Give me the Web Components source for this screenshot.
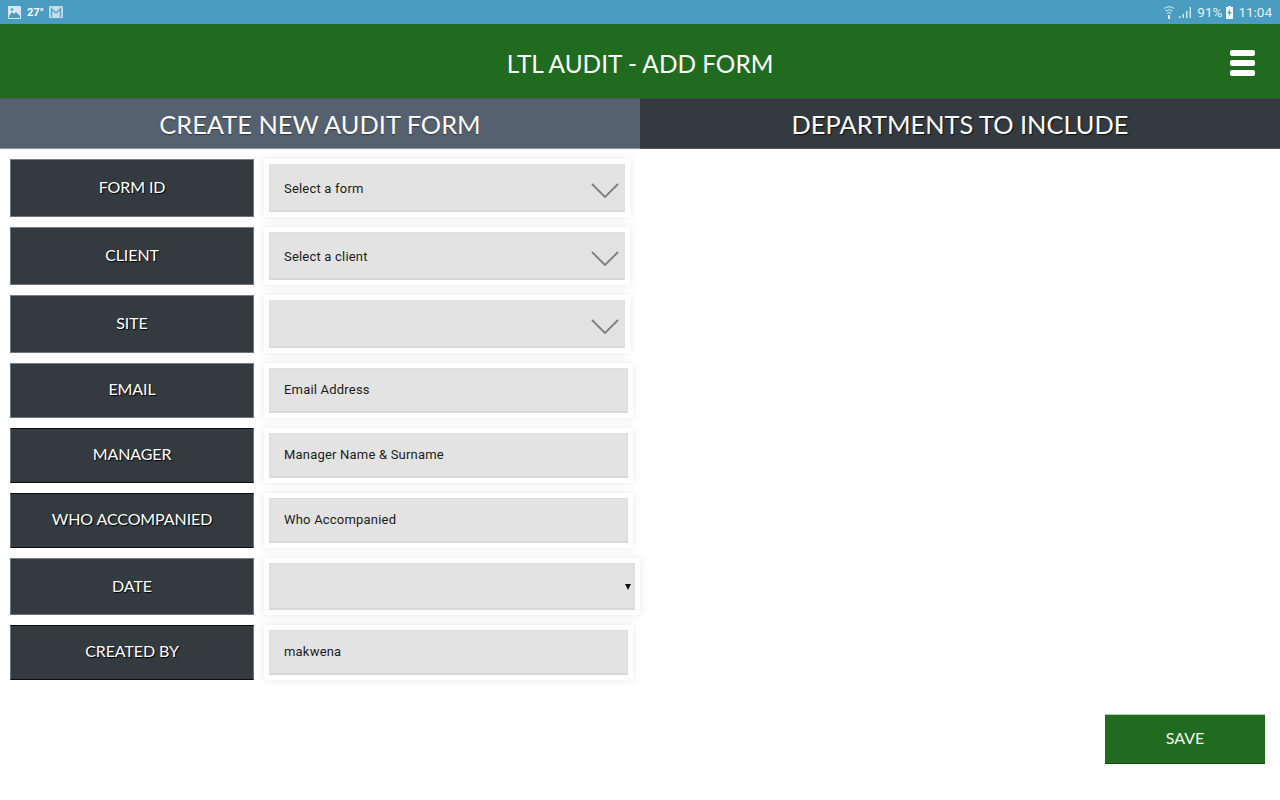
<!DOCTYPE html>
<html>
<head>
<meta charset="utf-8">
<title>LTL Audit - Add Form</title>
<style>
html, body { margin: 0; padding: 0; height: 100%; background: #fff; overflow: hidden; }
body { font-family: "Lato", "Liberation Sans", sans-serif; }
audit-app { height: 800px; }
</style>
</head>
<body>
<audit-app></audit-app>
<script>
class StatusBar extends HTMLElement {
  connectedCallback() {
    const root = this.attachShadow({ mode: 'open' });
    root.innerHTML = `
<style>
:host { display: flex; align-items: center; justify-content: space-between; height: 24px; background: #4a9dc0; color: #e4f1f6; font: 13.500px "Roboto", sans-serif; padding: 0 8px; box-sizing: border-box; }
.side { display: flex; align-items: center; }
.temp { font: bold 11px "Roboto", sans-serif; color: #fff; margin: 0 5px 0 6px; }
.pct { margin: 0 4px 0 5px; }
svg { display: block; }
</style>
<div class="side">
  <svg width="13" height="13" viewBox="0 0 13 13"><rect width="13" height="13" rx="1" fill="#d3e8f0"/><path d="M1 10l3-4 2 2 2-2 4 4v2H1z" fill="#4a9dc0"/><circle cx="4" cy="3.500" r="1.300" fill="#4a9dc0"/></svg>
  <span class="temp">27°</span>
  <svg width="14" height="12" viewBox="0 0 14 12"><rect width="14" height="12" rx="1" fill="#c4dfe9"/><path d="M2.500 11V3L7 7l4.500-4v8" fill="none" stroke="#5ba6c6" stroke-width="1.500"/></svg>
</div>
<div class="side">
  <svg width="12" height="14" viewBox="0 0 12 14" fill="none" stroke="#dcecf3"><path d="M1 3.500q5-3.500 10 0M2.500 6q3.500-2.500 7 0M4 8.300q2-1.300 4 0"/><path d="M6 10v4" stroke-width="2"/></svg>
  <svg width="13" height="12" viewBox="0 0 13 12" fill="#cfe4ed" style="margin-left:4px"><rect x="0" y="10" width="1.500" height="2"/><rect x="3.500" y="8" width="1.500" height="4"/><rect x="7" y="5" width="1.500" height="7"/><rect x="10.500" y="1" width="1.500" height="11"/></svg>
  <span class="pct">91%</span>
  <svg width="7" height="13" viewBox="0 0 7 13"><rect y="1" width="7" height="12" fill="#f2f8fa"/><rect x="2" width="3" height="1" fill="#f2f8fa"/><path d="M4.200 2.500L1.500 7.500h1.800L2.500 11l3-5H3.700z" fill="#4a9dc0"/></svg>
  <span style="margin-left:5px">11:04</span>
</div>`;
  }
}
customElements.define('status-bar', StatusBar);

class TopBar extends HTMLElement {
  connectedCallback() {
    const root = this.attachShadow({ mode: 'open' });
    root.innerHTML = `
<style>
:host { display: flex; align-items: center; justify-content: center; position: relative; height: 74px; padding-top: 5px; box-sizing: border-box; background: #216b20; color: #fff; font-size: 24.400px; }
.menu { position: absolute; right: 25px; top: 26px; display: flex; flex-direction: column; gap: 4px; }
.menu i { display: block; width: 25px; height: 6px; border-radius: 2px; background: #fff; }
</style>
<slot></slot>
<div class="menu"><i></i><i></i><i></i></div>`;
  }
}
customElements.define('top-bar', TopBar);

class TabHead extends HTMLElement {
  connectedCallback() {
    const root = this.attachShadow({ mode: 'open' });
    root.innerHTML = `
<style>
:host { flex: 1; display: flex; align-items: center; justify-content: center; height: 51px; color: #fff; font-size: 25.400px; background: #333b41; text-shadow: 1px 1px 1px #111; box-sizing: border-box; border-top: 1px solid #3c4349; border-bottom: 1px solid #555; }
:host([active]) { background: #56616f; text-shadow: 0 1px 1px #333; border-top-color: #4f5a67; border-bottom-color: #8a929b; }
</style>
<slot></slot>`;
  }
}
customElements.define('tab-head', TabHead);

class FormRow extends HTMLElement {
  connectedCallback() {
    const root = this.attachShadow({ mode: 'open' });
    const kind = this.getAttribute('kind') || 'input';
    const value = this.getAttribute('value') || '';
    let arrow = '';
    if (kind === 'select') {
      arrow = '<svg class="chev" width="28" height="16" viewBox="0 0 28 16"><path d="M1 2l13 13L27 2" fill="none" stroke="#7d8489" stroke-width="2"/></svg>';
    } else if (kind === 'date') {
      arrow = '<span class="tri"></span>';
    }
    root.innerHTML = `
<style>
:host { display: flex; gap: 10px; height: var(--h, 55px); }
.label { width: 244px; flex: none; display: flex; align-items: center; justify-content: center; padding-bottom: 4px; background: #333b41; color: #fff; font-size: 16px; letter-spacing: -.1px; text-shadow: 1px 1px 1px #000; box-sizing: border-box; border: 1px solid #6d747a; border-top-color: var(--top, #777e84); border-bottom-color: var(--bottom, #6d747a); }
:host([kind="date"]) .label { padding-bottom: 2px; }
.wrap { width: var(--w, 369px); box-sizing: border-box; padding: 5px; background: #fff; box-shadow: 0 0 8px rgba(0,0,0,.1); }
.field { position: relative; height: 100%; box-sizing: border-box; display: flex; align-items: center; padding: 0 14px 1px; background: #e3e3e3; color: #1c1c1c; font: 13px "Roboto", sans-serif; letter-spacing: .2px; border: 1px solid #dedede; border-bottom: 2px solid #d8d8d8; }
:host([kind="select"]) .field { padding: 1px 14px 0; }
.chev { position: absolute; right: 5px; top: 17px; }
.tri { position: absolute; right: 3px; top: 20px; width: 0; height: 0; border-left: 3px solid transparent; border-right: 3px solid transparent; border-top: 6px solid #111; }
</style>
<div class="label"><slot></slot></div>
<div class="wrap"><div class="field">${value}${arrow}</div></div>`;
  }
}
customElements.define('form-row', FormRow);

class SaveButton extends HTMLElement {
  connectedCallback() {
    const root = this.attachShadow({ mode: 'open' });
    root.innerHTML = `
<style>
:host { display: flex; align-items: center; justify-content: center; width: 160px; height: 50px; padding-bottom: 4px; background: #216b20; color: #f1f5f0; font-size: 16px; box-sizing: border-box; border-top: 1px solid #b9c9b8; border-bottom: 1px solid #0f4a0e; }
</style>
<slot></slot>`;
  }
}
customElements.define('save-button', SaveButton);

class AuditApp extends HTMLElement {
  connectedCallback() {
    const root = this.attachShadow({ mode: 'open' });
    root.innerHTML = `
<style>
:host { display: flex; flex-direction: column; font-family: "Lato", "Liberation Sans", sans-serif; }
.tabs { display: flex; }
.form { display: flex; flex-direction: column; gap: 10px; padding: 10px 0 0 10px; width: 640px; box-sizing: border-box; }
.foot { display: flex; justify-content: flex-end; padding: 34px 15px 0 0; }
.sel { --h: 58px; --w: 366px; }
.date { --h: 57px; --w: 376px; }
.dark { --top: #0c0f12; --bottom: #0c0f12; }
</style>
<status-bar></status-bar>
<top-bar>LTL AUDIT - ADD FORM</top-bar>
<div class="tabs">
  <tab-head active>CREATE NEW AUDIT FORM</tab-head>
  <tab-head>DEPARTMENTS TO INCLUDE</tab-head>
</div>
<div class="form">
  <form-row class="sel" kind="select" value="Select a form">FORM ID</form-row>
  <form-row class="sel" kind="select" value="Select a client">CLIENT</form-row>
  <form-row class="sel" kind="select">SITE</form-row>
  <form-row value="Email Address">EMAIL</form-row>
  <form-row class="dark" value="Manager Name &amp; Surname">MANAGER</form-row>
  <form-row class="dark" value="Who Accompanied">WHO ACCOMPANIED</form-row>
  <form-row class="date" kind="date">DATE</form-row>
  <form-row class="dark" value="makwena">CREATED BY</form-row>
</div>
<div class="foot"><save-button>SAVE</save-button></div>`;
  }
}
customElements.define('audit-app', AuditApp);
</script>
</body>
</html>
